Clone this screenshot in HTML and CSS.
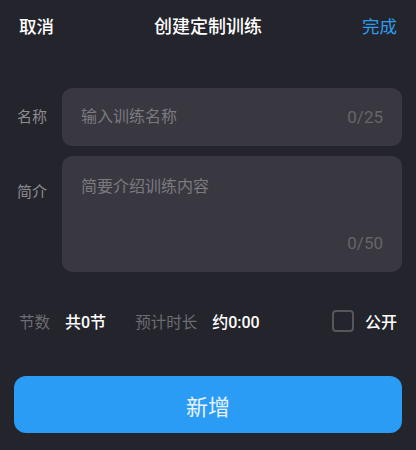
FILE: index.html
```html
<!DOCTYPE html>
<html>
<head>
  <title>创建定制训练</title>
  <link rel="stylesheet" href="styles.css">
</head>
<body>
  <div class="header">
    <span class="cancel">取消</span>
    <span class="title">创建定制训练</span>
    <span class="done">完成</span>
  </div>

  <div class="form">
    <div class="row">
      <span class="label">名称</span>
      <div class="field name-field">
        <span class="placeholder">输入训练名称</span>
        <span class="counter">0/25</span>
      </div>
    </div>
    <div class="row row-top">
      <span class="label">简介</span>
      <div class="field desc-field">
        <span class="placeholder">简要介绍训练内容</span>
        <span class="counter">0/50</span>
      </div>
    </div>
  </div>

  <div class="stats">
    <span class="stat-label">节数</span>
    <span class="stat-value">共0节</span>
    <span class="stat-label gap-left">预计时长</span>
    <span class="stat-value">约0:00</span>
    <span class="public">
      <span class="checkbox"></span>
      <span class="stat-value">公开</span>
    </span>
  </div>

  <button class="add">新增</button>
</body>
</html>
```

FILE: styles.css
```css
body {
  margin: 0;
  background-color: #24242c;
  font-family: Roboto, "Noto Sans CJK SC", sans-serif;
  color: #fff;
}
.header {
  display: grid;
  grid-template-columns: 1fr auto 1fr;
  align-items: center;
  height: 50px;
  padding: 0 19px;
  font-size: 17.5px;
  font-weight: 500;
}
.title {
  font-size: 18px;
}
.cancel {
  justify-self: start;
}
.done {
  justify-self: end;
  color: #2c9cf0;
  font-weight: 400;
}
.form {
  display: flex;
  flex-direction: column;
  gap: 10px;
  margin-top: 38px;
  padding-right: 14px;
}
.row {
  display: flex;
  align-items: center;
}
.row-top {
  align-items: flex-start;
}
.label {
  width: 45px;
  padding-left: 17px;
  font-size: 15px;
  line-height: 20px;
  color: #8c8c92;
}
.row-top .label {
  padding-top: 26px;
}
.field {
  flex: 1;
  background-color: #393840;
  border-radius: 10px;
  padding: 0 19px;
  font-size: 16px;
  line-height: 22px;
  box-sizing: border-box;
}
.name-field {
  height: 58px;
  display: flex;
  align-items: center;
  justify-content: space-between;
}
.desc-field {
  height: 116px;
  display: flex;
  flex-direction: column;
  justify-content: space-between;
  padding-top: 20px;
  padding-bottom: 18px;
}
.placeholder {
  color: #7b7a81;
}
.counter {
  color: #65656b;
  font-size: 17px;
  align-self: flex-end;
}
.name-field .counter {
  align-self: center;
}
.stats {
  display: flex;
  align-items: center;
  gap: 15px;
  height: 30px;
  margin-top: 34px;
  padding: 0 19px;
  font-size: 15.5px;
}
.stat-label {
  color: #6c6c72;
}
.stat-value {
  color: #fff;
  font-size: 16px;
  font-weight: 500;
}
.gap-left {
  margin-left: 14px;
}
.public {
  margin-left: auto;
  display: flex;
  align-items: center;
  gap: 11px;
}
.checkbox {
  width: 18px;
  height: 18px;
  border: 2px solid #56565c;
  border-radius: 4px;
}
.add {
  display: block;
  width: 388px;
  height: 57px;
  margin: 40px 14px 0;
  border: none;
  border-radius: 12px;
  background-color: #2a9cf5;
  color: #e8f3fd;
  font-family: inherit;
  font-size: 22px;
  cursor: pointer;
}
```
